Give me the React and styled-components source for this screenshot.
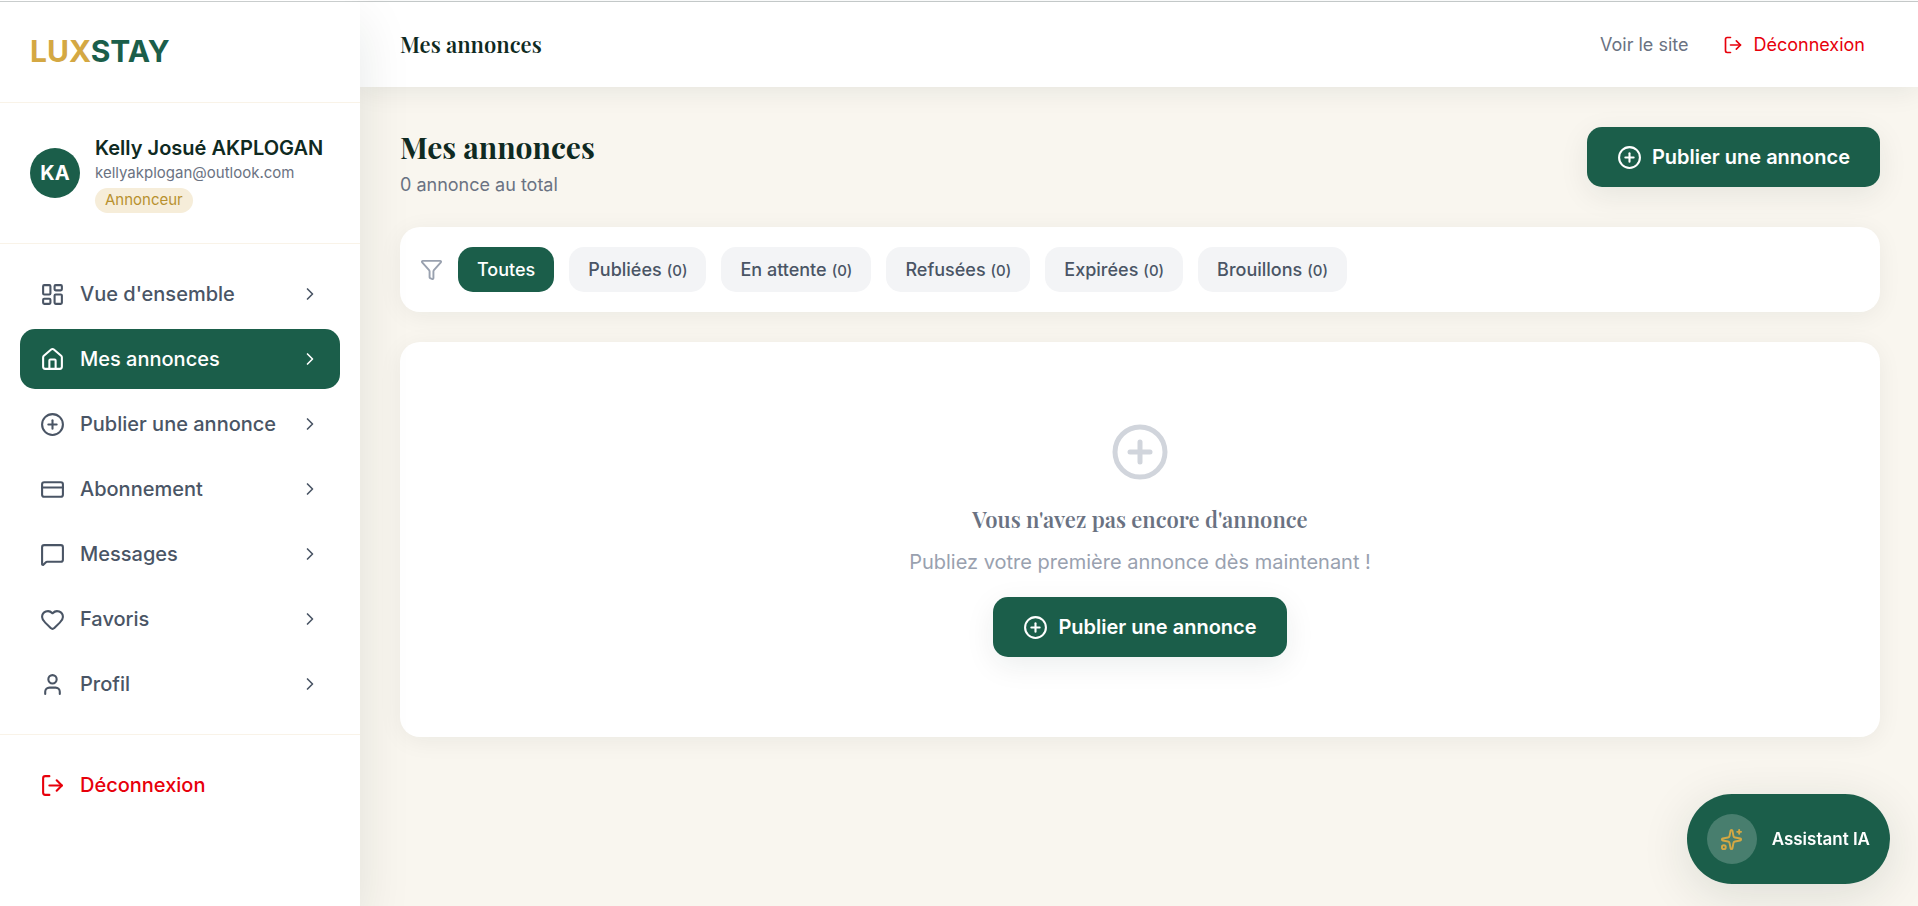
import styled, { createGlobalStyle, css } from "styled-components";
import {
  ChevronRight,
  CirclePlus,
  CreditCard,
  Funnel,
  Heart,
  House,
  LayoutDashboard,
  LogOut,
  MessageSquare,
  Sparkles,
  User,
} from "lucide-react";
import { useState } from "react";

const Colors = {
  Green: "#1b5e4a",
  Dark: "#0f2a22",
  Gold: "#d4a843",
  GoldDark: "#b8912f",
  GoldLight: "#f6edd9",
  Cream: "#f9f6ef",
  Line: "#f9f3e8",
  Slate: "#4a5565",
  Grey: "#6a7282",
  Muted: "#99a1af",
  Pale: "#d1d5dc",
  Pill: "#f3f4f6",
  Red: "#e7000b",
  White: "#ffffff",
};

const Fonts = {
  Sans: `Inter, "Liberation Sans", sans-serif`,
  Serif: `"Playfair Display", "Liberation Serif", serif`,
};

const GlobalStyle = createGlobalStyle`
  * {
    box-sizing: border-box;
    margin: 0;
    padding: 0;
  }

  body {
    background-color: ${Colors.Cream};
    color: ${Colors.Dark};
    font-family: ${Fonts.Sans};
    font-size: 20px;
    line-height: 30px;
  }

  button {
    border: none;
    background: none;
    font: inherit;
    cursor: pointer;
  }

  a {
    color: inherit;
    text-decoration: none;
  }

  ul {
    list-style: none;
  }

  svg {
    flex-shrink: 0;
  }
`;

const Page = styled.div`
  display: flex;
  min-height: 100vh;
  padding-top: 1px;
  background-color: ${Colors.White};
`;

const Frame = styled.div`
  display: flex;
  flex: 1;
  min-width: 0;
  border-top: 1px solid #c9cdcd;
  background-color: ${Colors.Cream};
`;

const Sidebar = styled.aside`
  z-index: 10;
  position: relative;
  width: 360px;
  flex-shrink: 0;
  background-color: ${Colors.White};
  box-shadow: 0 20px 50px rgba(15, 42, 34, 0.1);
  clip-path: inset(0 -60px 0 0);
`;

const Brand = styled.a`
  display: block;
  padding: 29px 30px 31px;
  border-bottom: 1px solid ${Colors.Line};
  color: ${Colors.Green};
  font-size: 30px;
  font-weight: 700;
  line-height: 40px;

  span {
    color: ${Colors.Gold};
  }
`;

const Account = styled.div`
  display: flex;
  align-items: center;
  gap: 15px;
  padding: 30px;
  border-bottom: 1px solid ${Colors.Line};
`;

const Avatar = styled.div`
  display: flex;
  align-items: center;
  justify-content: center;
  width: 50px;
  height: 50px;
  flex-shrink: 0;
  border-radius: 50%;
  background-color: ${Colors.Green};
  color: ${Colors.White};
  font-weight: 700;
`;

const Identity = styled.div`
  display: flex;
  flex-direction: column;
  align-items: flex-start;
  white-space: nowrap;
`;

const Name = styled.p`
  font-weight: 600;
`;

const Email = styled.p`
  color: ${Colors.Grey};
  font-size: 15px;
  line-height: 20px;
`;

const Badge = styled.span`
  margin-top: 5px;
  padding: 2px 10px 3px;
  border-radius: 13px;
  background-color: ${Colors.GoldLight};
  color: ${Colors.GoldDark};
  font-size: 15px;
  line-height: 20px;
`;

const Menu = styled.ul`
  display: flex;
  flex-direction: column;
  gap: 5px;
  padding: 20px;
`;

const menuRow = css`
  display: flex;
  align-items: center;
  gap: 15px;
  width: 100%;
  padding: 15px 20px;
  border-radius: 15px;
  font-weight: 500;
`;

const MenuLink = styled.a`
  ${menuRow}
  background-color: ${({ $active }) => ($active ? Colors.Green : "transparent")};
  color: ${({ $active }) => ($active ? Colors.White : Colors.Slate)};

  span {
    flex: 1;
  }
`;

const SidebarFooter = styled.div`
  padding: 20px;
  border-top: 1px solid ${Colors.Line};
`;

const LogoutRow = styled.button`
  ${menuRow}
  color: ${Colors.Red};
`;

const Main = styled.div`
  flex: 1;
  min-width: 0;
`;

const TopBar = styled.header`
  display: flex;
  align-items: center;
  justify-content: space-between;
  height: 85px;
  padding: 0 38px 0 40px;
  background-color: ${Colors.White};
  box-shadow: 0 4px 25px rgba(15, 42, 34, 0.08);
`;

const TopTitle = styled.h2`
  font-family: ${Fonts.Serif};
  font-size: 22px;
  font-weight: 600;
  line-height: 35px;
`;

const TopActions = styled.div`
  display: flex;
  align-items: center;
  gap: 20px;
  font-size: 18px;
  line-height: 25px;
`;

const SiteLink = styled.a`
  color: ${Colors.Grey};
`;

const LogoutButton = styled.button`
  display: flex;
  align-items: center;
  gap: 10px;
  padding: 10px 15px;
  color: ${Colors.Red};
`;

const Content = styled.main`
  display: flex;
  flex-direction: column;
  gap: 30px;
  padding: 40px 38px 40px 40px;
`;

const Heading = styled.div`
  display: flex;
  align-items: flex-start;
  justify-content: space-between;
`;

const Title = styled.h1`
  font-family: ${Fonts.Serif};
  font-size: 30px;
  font-weight: 700;
  line-height: 40px;
`;

const Total = styled.p`
  margin-top: 5px;
  color: ${Colors.Grey};
  font-size: 18px;
  line-height: 25px;
`;

const PublishButton = styled.button`
  display: inline-flex;
  align-items: center;
  gap: 10px;
  padding: 15px 30px;
  border-radius: 15px;
  background-color: ${Colors.Green};
  box-shadow: 0 8px 30px rgba(15, 42, 34, 0.08);
  color: ${Colors.White};
  font-weight: 600;
`;

const Card = styled.section`
  border-radius: 20px;
  background-color: ${Colors.White};
  box-shadow: 0 4px 25px rgba(15, 42, 34, 0.06);
`;

const Filters = styled(Card)`
  display: flex;
  align-items: center;
  flex-wrap: wrap;
  gap: 15px;
  padding: 20px;
`;

const FilterButton = styled.button`
  padding: 10px 19px;
  border-radius: 15px;
  background-color: ${({ $active }) => ($active ? Colors.Green : Colors.Pill)};
  color: ${({ $active }) => ($active ? Colors.White : Colors.Slate)};
  font-size: 18px;
  font-weight: 500;
  line-height: 25px;

  small {
    margin-left: 5px;
    font-size: 15px;
    line-height: 20px;
  }
`;

const Empty = styled(Card)`
  display: flex;
  flex-direction: column;
  align-items: center;
  padding: 80px 20px;
`;

const EmptyTitle = styled.h3`
  margin: 20px 0 10px;
  color: ${Colors.Grey};
  font-family: ${Fonts.Serif};
  font-size: 22px;
  font-weight: 600;
  line-height: 35px;
`;

const EmptyText = styled.p`
  margin-bottom: 20px;
  color: ${Colors.Muted};
`;

const Assistant = styled.button`
  z-index: 20;
  position: fixed;
  right: 28px;
  bottom: 22px;
  display: flex;
  align-items: center;
  gap: 15px;
  padding: 20px;
  border-radius: 45px;
  background-color: ${Colors.Green};
  box-shadow: 0 10px 50px rgba(15, 42, 34, 0.12);
  color: ${Colors.White};
  font-size: 17px;
  font-weight: 600;
`;

const AssistantIcon = styled.span`
  display: flex;
  align-items: center;
  justify-content: center;
  width: 50px;
  height: 50px;
  border-radius: 50%;
  background-color: rgba(255, 255, 255, 0.2);
  color: ${Colors.Gold};
`;

const menu = [
  { label: "Vue d'ensemble", icon: LayoutDashboard },
  { label: "Mes annonces", icon: House },
  { label: "Publier une annonce", icon: CirclePlus },
  { label: "Abonnement", icon: CreditCard },
  { label: "Messages", icon: MessageSquare },
  { label: "Favoris", icon: Heart },
  { label: "Profil", icon: User },
];

const filters = [
  { label: "Toutes" },
  { label: "Publiées", count: 0 },
  { label: "En attente", count: 0 },
  { label: "Refusées", count: 0 },
  { label: "Expirées", count: 0 },
  { label: "Brouillons", count: 0 },
];

function Publish() {
  return (
    <PublishButton type="button">
      <CirclePlus size={25} />
      Publier une annonce
    </PublishButton>
  );
}

export default function App() {
  const [page, setPage] = useState("Mes annonces");
  const [filter, setFilter] = useState("Toutes");

  return (
    <Page>
      <GlobalStyle />
      <Frame>
        <Sidebar>
          <Brand href="#">
            <span>LUX</span>STAY
          </Brand>

          <Account>
            <Avatar>KA</Avatar>
            <Identity>
              <Name>Kelly Josué AKPLOGAN</Name>
              <Email>kellyakplogan@outlook.com</Email>
              <Badge>Annonceur</Badge>
            </Identity>
          </Account>

          <nav>
            <Menu>
              {menu.map(({ label, icon: Icon }) => (
                <li key={label}>
                  <MenuLink
                    href="#"
                    $active={label === page}
                    aria-current={label === page ? "page" : undefined}
                    onClick={() => setPage(label)}
                  >
                    <Icon size={25} />
                    <span>{label}</span>
                    <ChevronRight size={20} />
                  </MenuLink>
                </li>
              ))}
            </Menu>
          </nav>

          <SidebarFooter>
            <LogoutRow type="button">
              <LogOut size={25} />
              Déconnexion
            </LogoutRow>
          </SidebarFooter>
        </Sidebar>

        <Main>
          <TopBar>
            <TopTitle>Mes annonces</TopTitle>
            <TopActions>
              <SiteLink href="#">Voir le site</SiteLink>
              <LogoutButton type="button">
                <LogOut size={20} />
                Déconnexion
              </LogoutButton>
            </TopActions>
          </TopBar>

          <Content>
            <Heading>
              <div>
                <Title>Mes annonces</Title>
                <Total>0 annonce au total</Total>
              </div>
              <Publish />
            </Heading>

            <Filters aria-label="Filtres">
              <Funnel size={23} color={Colors.Muted} />
              {filters.map(({ label, count }) => (
                <FilterButton
                  key={label}
                  type="button"
                  $active={label === filter}
                  aria-pressed={label === filter}
                  onClick={() => setFilter(label)}
                >
                  {label}
                  {count !== undefined && <small>({count})</small>}
                </FilterButton>
              ))}
            </Filters>

            <Empty>
              <CirclePlus size={60} color={Colors.Pale} />
              <EmptyTitle>Vous n'avez pas encore d'annonce</EmptyTitle>
              <EmptyText>Publiez votre première annonce dès maintenant !</EmptyText>
              <Publish />
            </Empty>
          </Content>
        </Main>
      </Frame>

      <Assistant type="button">
        <AssistantIcon>
          <Sparkles size={23} />
        </AssistantIcon>
        Assistant IA
      </Assistant>
    </Page>
  );
}
